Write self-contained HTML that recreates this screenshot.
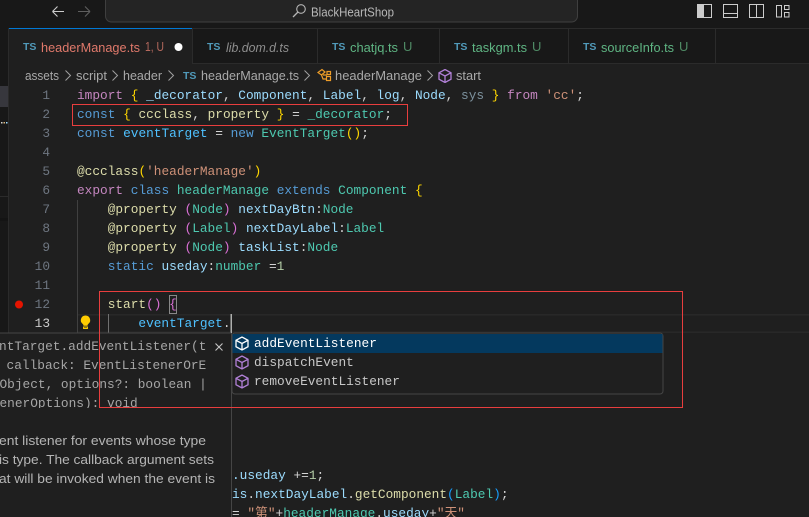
<!DOCTYPE html>
<html><head><meta charset="utf-8"><style>
html,body{margin:0;padding:0;background:#1f1f1f;overflow:hidden}
svg{display:block}
text{white-space:pre}
.c{font:12.8px "Liberation Mono","Noto Sans CJK SC",monospace;fill:#d4d4d4}
.s{font:13px "Liberation Sans","Noto Sans CJK SC",sans-serif}
.n{font:12.8px "Liberation Mono",monospace;fill:#6e7681;text-anchor:end}
.ts{font:bold 10.5px "Liberation Sans",sans-serif;fill:#519aba}
.b{fill:#569cd6}.p{fill:#c586c0}.v{fill:#9cdcfe}.k{fill:#4fc1ff}.t{fill:#4ec9b0}.f{fill:#dcdcaa}.r{fill:#ce9178}.m{fill:#b5cea8}.g{fill:#ffd700}.o{fill:#da70d6}.l{fill:#179fff}.d{fill:#7d929e}
.h{fill:#a6a6a6}.bc{fill:#a9a9a9}
.ic{fill:none;stroke:#ccc;stroke-width:1}
</style></head><body>
<svg width="809" height="517" viewBox="0 0 809 517" xmlns="http://www.w3.org/2000/svg">
<defs><symbol id="cube" viewBox="0 0 14 14"><path d="M7 .5 L13 3.800 V10.200 L7 13.500 L1 10.200 V3.800 Z M1 3.800 L7 7 L13 3.800 M7 7 V13.500" fill="none" stroke-width="1.300" stroke="currentColor"/></symbol></defs>
<rect width="809" height="517" fill="#1f1f1f"/>
<rect width="809" height="28" fill="#181818"/>
<rect x="0" y="28" width="8" height="305" fill="#181818"/>
<rect x="0" y="86" width="8" height="21" fill="#37373d"/>
<rect x="1" y="122" width="1.500" height="1.500" fill="#d4d4d4"/><rect x="3.500" y="122" width="1.500" height="1.500" fill="#dcb67a"/><rect x="6" y="122" width="1.500" height="1.500" fill="#9cdcfe"/>
<rect x="0" y="196" width="8" height="1" fill="#2b2b2b"/>
<rect x="0" y="218" width="8" height="3" fill="#141414"/>
<rect x="8" y="28" width="1" height="305" fill="#2b2b2b"/>
<!-- title -->
<path d="M52.500 11.500H64M52.500 11.500L57.500 6.500M52.500 11.500L57.500 16.500" fill="none" stroke="#ccc" stroke-width="1.100"/>
<path d="M90 11.500H78M90 11.500L85 6.500M90 11.500L85 16.500" fill="none" stroke="#5f5f5f" stroke-width="1.100"/>
<rect x="105.500" y="-8" width="472" height="30" rx="6" fill="#242424" stroke="#3f3f3f"/>
<circle cx="301" cy="9" r="4.300" fill="none" stroke="#b5b5b5" stroke-width="1.100"/><path d="M298 12L293 17" stroke="#b5b5b5" stroke-width="1.300"/>
<text class="s" x="311" y="16.500" fill="#b8b8b8" textLength="83" lengthAdjust="spacingAndGlyphs">BlackHeartShop</text>
<g class="ic">
<rect x="697.500" y="4.500" width="14" height="13"/><rect x="698" y="5" width="6" height="12" fill="#ccc" stroke="none"/>
<rect x="723.500" y="4.500" width="14" height="13"/><path d="M724 13.500H737"/>
<rect x="749.500" y="4.500" width="14" height="13"/><path d="M756.500 5V17"/>
<rect x="776.500" y="5.500" width="5" height="11.500"/><rect x="784.500" y="5.500" width="4.500" height="4"/><rect x="784.500" y="12.500" width="4.500" height="4.500"/>
</g>
<!-- tabs -->
<rect x="9" y="28" width="800" height="35" fill="#181818"/>
<rect x="9" y="28" width="183" height="36" fill="#1f1f1f"/>
<rect x="9" y="28" width="183" height="1" fill="#0078d4"/>
<rect x="192" y="28" width="617" height="1" fill="#2b2b2b"/>
<rect x="192" y="63" width="617" height="1" fill="#2b2b2b"/>
<g fill="#2b2b2b"><rect x="192" y="28" width="1" height="35"/><rect x="317" y="28" width="1" height="35"/><rect x="439" y="28" width="1" height="35"/><rect x="568" y="28" width="1" height="35"/><rect x="715" y="28" width="1" height="35"/></g>
<text class="ts" x="23" y="50">TS</text><text class="s" x="41" y="52" fill="#e0796b" textLength="99" lengthAdjust="spacingAndGlyphs">headerManage.ts</text><text class="s" x="145" y="51" fill="#b5695d" textLength="19" lengthAdjust="spacingAndGlyphs">1, U</text>
<circle cx="178.500" cy="47" r="4" fill="#fff"/>
<text class="ts" x="207" y="50">TS</text><text class="s" x="226" y="52" fill="#8f8f8f" style="font-style:italic" textLength="63" lengthAdjust="spacingAndGlyphs">lib.dom.d.ts</text>
<text class="ts" x="332" y="50">TS</text><text class="s" x="350" y="52" fill="#5fb583" textLength="48" lengthAdjust="spacingAndGlyphs">chatjq.ts</text><text class="s" x="403" y="51" fill="#4f8a64">U</text>
<text class="ts" x="454" y="50">TS</text><text class="s" x="472" y="52" fill="#5fb583" textLength="55" lengthAdjust="spacingAndGlyphs">taskgm.ts</text><text class="s" x="532" y="51" fill="#4f8a64">U</text>
<text class="ts" x="583" y="50">TS</text><text class="s" x="601" y="52" fill="#5fb583" textLength="73" lengthAdjust="spacingAndGlyphs">sourceInfo.ts</text><text class="s" x="679" y="51" fill="#4f8a64">U</text>
<!-- breadcrumb -->
<g class="s">
<text class="s bc" x="25" y="80" textLength="34" lengthAdjust="spacingAndGlyphs">assets</text>
<text class="s bc" x="76" y="80" textLength="31" lengthAdjust="spacingAndGlyphs">script</text>
<text class="s bc" x="123" y="80" textLength="39" lengthAdjust="spacingAndGlyphs">header</text>
<text class="s bc" x="201" y="80" textLength="98" lengthAdjust="spacingAndGlyphs">headerManage.ts</text>
<text class="s bc" x="335" y="80" textLength="87" lengthAdjust="spacingAndGlyphs">headerManage</text>
<text class="s bc" x="456" y="80" textLength="25" lengthAdjust="spacingAndGlyphs">start</text>
</g>
<path d="M65.500 70.500L70.500 75.500L65.500 80.500M112.500 70.500L117.500 75.500L112.500 80.500M168.500 70.500L173.500 75.500L168.500 80.500M304.500 70.500L309.500 75.500L304.500 80.500M427.500 70.500L432.500 75.500L427.500 80.500" fill="none" stroke="#a0a0a0" stroke-width="1"/>
<text class="ts" x="183" y="79">TS</text>
<path d="M318 72.500L322 69.500L325 72L321.500 75ZM321.500 75L323 79H326.500M326.500 76.500H330.500V80.500H326.500ZM323 75H327M327 71.500H330.500V74.500H327Z" fill="none" stroke="#ee9d28" stroke-width="1.200"/>
<use href="#cube" x="438" y="69" width="14" height="14" color="#b180d7"/>
<!-- line numbers -->
<text class="n" x="50" y="99">1</text><text class="n" x="50" y="118">2</text><text class="n" x="50" y="137">3</text><text class="n" x="50" y="156">4</text><text class="n" x="50" y="175">5</text><text class="n" x="50" y="194">6</text><text class="n" x="50" y="213">7</text><text class="n" x="50" y="232">8</text><text class="n" x="50" y="251">9</text><text class="n" x="50" y="270">10</text><text class="n" x="50" y="289">11</text><text class="n" x="50" y="308">12</text><text class="n" x="50" y="327" style="fill:#ccc">13</text>
<circle cx="19" cy="304.500" r="4" fill="#e51400"/>
<!-- guides and current line -->
<rect x="77" y="200" width="1" height="133" fill="#404040"/>
<rect x="78" y="314" width="731" height="1.500" fill="#282828"/>
<rect x="78" y="331.500" width="731" height="1.500" fill="#282828"/>
<rect x="108" y="314" width="1" height="19" fill="#707070"/>
<path d="M85.500 315.500a4.700 4.700 0 0 0-3 8.300c.7.600 1 1.200 1 2h4c0-.8.3-1.400 1-2a4.700 4.700 0 0 0-3-8.300z" fill="#ffcc00"/><path d="M83.500 327h4v1.500h-4z" fill="none" stroke="#ffcc00" stroke-width=".9"/>
<!-- code -->
<text class="c" x="77" y="99"><tspan class="p">import</tspan> <tspan class="g">{</tspan> <tspan class="v">_decorator</tspan>, <tspan class="v">Component</tspan>, <tspan class="v">Label</tspan>, <tspan class="v">log</tspan>, <tspan class="v">Node</tspan>, <tspan class="d">sys</tspan> <tspan class="g">}</tspan> <tspan class="p">from</tspan> <tspan class="r">'cc'</tspan>;</text>
<text class="c" x="77" y="118"><tspan class="b">const</tspan> <tspan class="g">{</tspan> <tspan class="f">ccclass</tspan>, <tspan class="f">property</tspan> <tspan class="g">}</tspan> = <tspan class="t">_decorator</tspan>;</text>
<text class="c" x="77" y="137"><tspan class="b">const</tspan> <tspan class="k">eventTarget</tspan> = <tspan class="b">new</tspan> <tspan class="t">EventTarget</tspan><tspan class="g">()</tspan>;</text>
<text class="c" x="77" y="175"><tspan class="f">@ccclass</tspan><tspan class="g">(</tspan><tspan class="r">'headerManage'</tspan><tspan class="g">)</tspan></text>
<text class="c" x="77" y="194"><tspan class="p">export</tspan> <tspan class="b">class</tspan> <tspan class="t">headerManage</tspan> <tspan class="b">extends</tspan> <tspan class="t">Component</tspan> <tspan class="g">{</tspan></text>
<text class="c" x="107.700" y="213"><tspan class="f">@property</tspan> <tspan class="o">(</tspan><tspan class="t">Node</tspan><tspan class="o">)</tspan> <tspan class="v">nextDayBtn</tspan>:<tspan class="t">Node</tspan></text>
<text class="c" x="107.700" y="232"><tspan class="f">@property</tspan> <tspan class="o">(</tspan><tspan class="t">Label</tspan><tspan class="o">)</tspan> <tspan class="v">nextDayLabel</tspan>:<tspan class="t">Label</tspan></text>
<text class="c" x="107.700" y="251"><tspan class="f">@property</tspan> <tspan class="o">(</tspan><tspan class="t">Node</tspan><tspan class="o">)</tspan> <tspan class="v">taskList</tspan>:<tspan class="t">Node</tspan></text>
<text class="c" x="107.700" y="270"><tspan class="b">static</tspan> <tspan class="v">useday</tspan>:<tspan class="t">number</tspan> =<tspan class="m">1</tspan></text>
<rect x="169.500" y="295.500" width="7" height="18" fill="none" stroke="#888"/>
<text class="c" x="107.700" y="308"><tspan class="f">start</tspan><tspan class="o">()</tspan> <tspan class="o">{</tspan></text>
<text class="c" x="138.400" y="327"><tspan class="k">eventTarget</tspan>.</text>
<rect x="230.500" y="314" width="1.500" height="19" fill="#aeafad"/>
<!-- hover -->
<rect x="0" y="333" width="231.500" height="184" fill="#1f1f1f"/>
<rect x="0" y="332.500" width="231" height="1" fill="#454545"/>
<rect x="231" y="333" width="1" height="184" fill="#454545"/>
<svg x="0" y="333" width="231" height="184">
<g class="c" transform="translate(0,-333)">
<text class="c h" x="-24" y="350">eventTarget.addEventListener(t</text>
<text class="c h" x="-8.800" y="369">  callback: EventListenerOrE</text>
<text class="c h" x="-.5" y="388">Object, options?: boolean |</text>
<text class="c h" x="-.5" y="407">enerOptions): void</text>
<text class="s" x="-1" y="445" fill="#b5b5b5" textLength="207" lengthAdjust="spacingAndGlyphs">ent listener for events whose type</text>
<text class="s" x="-1" y="464" fill="#b5b5b5" textLength="215" lengthAdjust="spacingAndGlyphs">is type. The callback argument sets</text>
<text class="s" x="-1" y="483" fill="#b5b5b5" textLength="216" lengthAdjust="spacingAndGlyphs">at will be invoked when the event is</text>
</g>
</svg>
<rect x="0" y="408" width="231" height="20" fill="#1f1f1f"/>
<path d="M215.500 343.500l7 7M222.500 343.500l-7 7" stroke="#c5c5c5" stroke-width="1.100"/>
<!-- lower code -->
<text class="c" x="232" y="479"><tspan class="v">.useday</tspan> +=<tspan class="m">1</tspan>;</text>
<text class="c" x="232" y="498"><tspan class="v">is</tspan>.<tspan class="v">nextDayLabel</tspan>.<tspan class="f">getComponent</tspan><tspan class="l">(</tspan><tspan class="t">Label</tspan><tspan class="l">)</tspan>;</text>
<text class="c" x="232" y="517">= <tspan class="r">"第"</tspan>+<tspan class="t">headerManage</tspan>.<tspan class="v">useday</tspan>+<tspan class="r">"天"</tspan></text>
<!-- suggest -->
<rect x="232" y="333" width="431" height="61" rx="3" fill="#1f1f1f" stroke="#454545"/>
<rect x="232.500" y="334" width="430" height="19" fill="#04395e"/>
<use href="#cube" x="235" y="336.500" width="14" height="14" color="#fff"/>
<use href="#cube" x="235" y="355.500" width="14" height="14" color="#b180d7"/>
<use href="#cube" x="235" y="374.500" width="14" height="14" color="#b180d7"/>
<text class="c" x="254" y="347" style="fill:#fff">addEventListener</text>
<text class="c" x="254" y="366" style="fill:#c8c8c8">dispatchEvent</text>
<text class="c" x="254" y="385" style="fill:#c8c8c8">removeEventListener</text>
<!-- annotations -->
<rect x="72.500" y="104.500" width="335" height="21" fill="none" stroke="#e83e3e" stroke-width="1"/>
<rect x="99.500" y="291.500" width="583" height="116" fill="none" stroke="#e83e3e" stroke-width="1"/>
</svg>
</body></html>
